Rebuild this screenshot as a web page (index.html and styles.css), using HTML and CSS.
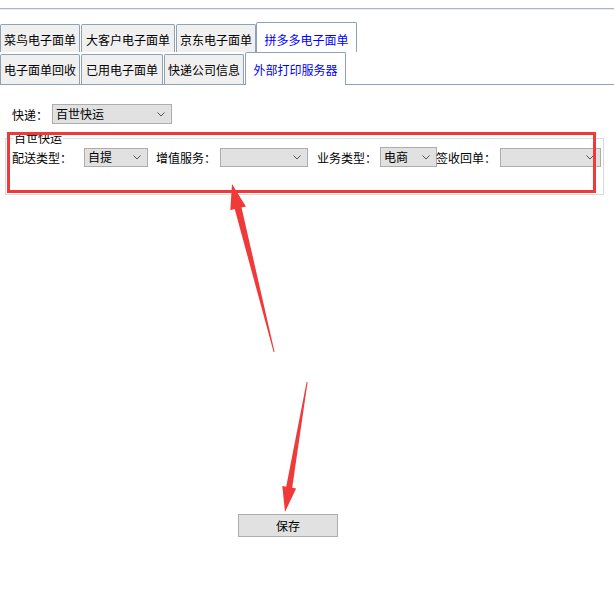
FILE: index.html
```html
<!DOCTYPE html>
<html lang="zh">
<head>
<meta charset="utf-8">
<title>外部打印服务器</title>
<link rel="stylesheet" href="styles.css">
</head>
<body>
<div class="page">
  <div class="topbar"></div>
  <div class="tabs">
    <div class="tabrow row1">
      <div class="tab w80">菜鸟电子面单</div>
      <div class="tab w94">大客户电子面单</div>
      <div class="tab w80 flush">京东电子面单</div>
      <div class="tab active w101 flush">拼多多电子面单</div>
    </div>
    <div class="tabrow row2">
      <div class="tab w80">电子面单回收</div>
      <div class="tab w82">已用电子面单</div>
      <div class="tab w80">快递公司信息</div>
      <div class="tab active w101 flush">外部打印服务器</div>
    </div>
  </div>
  <div class="content">
    <div class="express">
      <span class="lbl">快递：</span>
      <div class="select sel-express"><span>百世快运</span><svg class="chev" width="8" height="5" viewBox="0 0 8 5"><path d="M0.5 0.5 L4 4 L7.5 0.5" fill="none" stroke="#555" stroke-width="1"/></svg></div>
    </div>
    <div class="group">
      <span class="caption">百世快运</span>
      <div class="grow">
        <span class="glbl l1">配送类型：</span>
        <div class="select s1"><span>自提</span><svg class="chev" width="8" height="5" viewBox="0 0 8 5"><path d="M0.5 0.5 L4 4 L7.5 0.5" fill="none" stroke="#555" stroke-width="1"/></svg></div>
        <span class="glbl l2">增值服务：</span>
        <div class="select s2"><span></span><svg class="chev" width="8" height="5" viewBox="0 0 8 5"><path d="M0.5 0.5 L4 4 L7.5 0.5" fill="none" stroke="#555" stroke-width="1"/></svg></div>
        <span class="glbl l3">业务类型：</span>
        <div class="select s3"><span>电商</span><svg class="chev" width="8" height="5" viewBox="0 0 8 5"><path d="M0.5 0.5 L4 4 L7.5 0.5" fill="none" stroke="#555" stroke-width="1"/></svg></div>
        <span class="glbl l4">签收回单：</span>
        <div class="select s4"><span></span><svg class="chev" width="8" height="5" viewBox="0 0 8 5"><path d="M0.5 0.5 L4 4 L7.5 0.5" fill="none" stroke="#555" stroke-width="1"/></svg></div>
      </div>
    </div>
    <div class="btnrow"><button class="save">保存</button></div>
  </div>
  <div class="redbox"></div>
  <svg class="arrows" width="614" height="599" viewBox="0 0 614 599">
    <polygon fill="#f03a3a" points="274.6,352 241.5,207.5 245.9,206.4 232,184 230.3,210.2 234.7,209.1 273.6,352"/>
    <polygon fill="#f03a3a" points="307.6,382 292.2,487.8 296.1,488.5 285,512 282.3,486.1 286.2,486.8 306.6,382"/>
  </svg>
</div>
</body>
</html>
```
FILE: styles.css
```css
html, body {
  margin: 0;
  padding: 0;
  background: #ffffff;
}
body {
  font-family: "Noto Sans CJK SC", "Noto Sans", sans-serif;
  font-size: 12px;
  color: #000;
}
.page {
  position: relative;
  width: 614px;
  height: 599px;
  overflow: hidden;
}
.topbar {
  height: 8px;
  border-bottom: 1px solid #a7b3da;
  box-shadow: 0 1px 0 #e8ebf5;
}
.tabs {
  margin-top: 13px;
}
.tabrow {
  display: flex;
  align-items: flex-end;
}
.row1 {
  height: 30px;
}
.row2 {
  height: 32px;
  border-bottom: 1px solid #8fa2b4;
}
.tab {
  box-sizing: border-box;
  border: 1px solid #8fa2b4;
  border-bottom: none;
  border-radius: 2px 2px 0 0;
  background: #f0f0f0;
  text-align: center;
  line-height: 22px;
  white-space: nowrap;
  margin-right: 1px;
}
.tab.flush { margin-right: 0; }
.row1 .tab { height: 28px; padding-top: 4px; }
.row1 .tab.active { height: 30px; padding-top: 6px; }
.row2 .tab { height: 30px; padding-top: 4px; }
.row2 .tab.active { height: 33px; padding-top: 6px; margin-bottom: -1px; }
.tab.active {
  background: #ffffff;
  color: #0000ff;
}
.w80 { width: 80px; }
.w82 { width: 82px; }
.w94 { width: 94px; }
.w101 { width: 101px; }

.content {
  padding-top: 19px;
}
.express {
  display: flex;
  align-items: center;
  height: 20px;
}
.lbl {
  padding-left: 12px;
  box-sizing: border-box;
  width: 52px;
}
.select {
  box-sizing: border-box;
  display: flex;
  align-items: center;
  justify-content: space-between;
  border: 1px solid #adadad;
  background: #e1e1e1;
  padding: 0 6px 0 3px;
  line-height: 16px;
}
.chev { display: block; }
.sel-express { width: 120px; height: 20px; }

.group {
  box-sizing: border-box;
  margin: 14px 0 0 5px;
  width: 599px;
  height: 57px;
  border: 1px solid #dadada;
}
.caption {
  display: block;
  width: max-content;
  margin: -9px 0 0 7px;
  padding: 0 1px;
  background: #ffffff;
  line-height: 16px;
}
.grow {
  display: flex;
  align-items: center;
  height: 20px;
  margin-top: 1px;
}
.glbl { box-sizing: border-box; white-space: nowrap; }
.l1 { width: 78px; padding-left: 6px; }
.l2 { width: 72px; padding-left: 8px; }
.l3 { width: 72px; padding-left: 9px; }
.l4 { width: 64px; margin-left: -1px; }
.s1 { width: 64px; height: 19px; }
.s2 { width: 88px; height: 19px; }
.s3 { width: 57px; height: 20px; }
.s4 { width: 101px; height: 19px; }

.btnrow {
  margin-top: 319px;
  padding-left: 238px;
}
.save {
  box-sizing: border-box;
  width: 100px;
  height: 23px;
  border: 1px solid #adadad;
  background: #e1e1e1;
  font-family: "Noto Sans CJK SC", "Noto Sans", sans-serif;
  font-size: 12px;
  color: #000;
  padding: 0;
}

.redbox {
  position: absolute;
  left: 7px;
  top: 132px;
  width: 589px;
  height: 61px;
  box-sizing: border-box;
  border: 3px solid #f03a3a;
}
.arrows {
  position: absolute;
  left: 0;
  top: 0;
}
```
